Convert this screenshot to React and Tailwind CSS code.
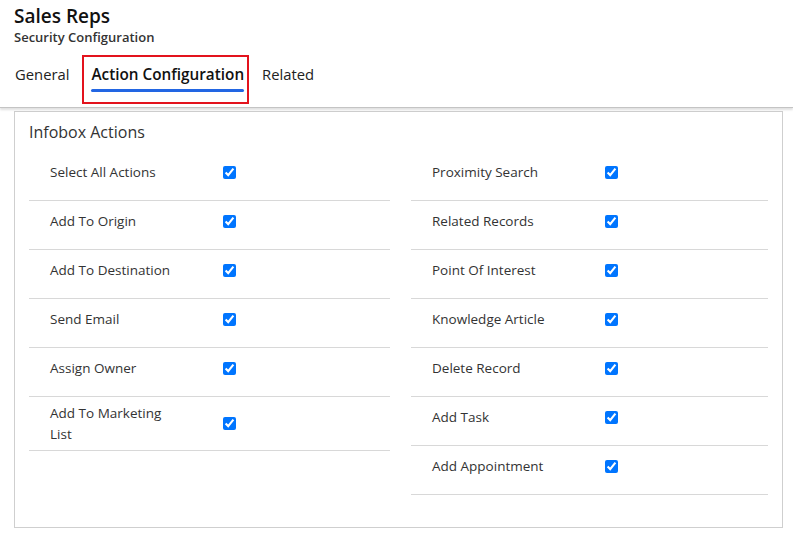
import React from 'react';

const leftActions = [
  'Select All Actions',
  'Add To Origin',
  'Add To Destination',
  'Send Email',
  'Assign Owner',
  'Add To Marketing List',
];

const rightActions = [
  'Proximity Search',
  'Related Records',
  'Point Of Interest',
  'Knowledge Article',
  'Delete Record',
  'Add Task',
  'Add Appointment',
];

const font = { fontFamily: '"Open Sans", "Noto Sans", sans-serif' };

const ActionRow = ({ label }) => {
  const tall = label.length > 18;
  return (
    <div
      className={`flex items-center border-b border-[#d8d8d8] pl-[21px] ${
        tall ? 'h-[54px]' : 'h-[49px] pb-[7px]'
      }`}
    >
      <div className="w-[173px] shrink-0">
        <div className="max-w-[128px] text-[13.5px] leading-[21px] text-[#333]">{label}</div>
      </div>
      <input type="checkbox" checked readOnly className="h-[13px] w-[13px]" />
    </div>
  );
};

const App = () => {
  return (
    <div className="min-h-[540px] w-[793px] bg-white" style={font}>
      {/* header */}
      <div className="relative z-10 border-b border-[#c4c4c4] bg-white pl-[14px] shadow-[0_2px_2px_rgba(0,0,0,0.12)]">
        <div className="pt-[3px] text-[19px] font-semibold leading-[26px] text-[#111]">Sales Reps</div>
        <div className="text-[13px] font-semibold leading-[17px] text-[#333]">Security Configuration</div>
        <div className="mt-[9px] flex items-stretch">
          <div className="flex h-[49px] items-center pb-[10px] pl-[1px] pr-[13px] text-[14.8px] text-[#222]">General</div>
          <div className="flex h-[49px] items-center border-2 border-[#e3131d] pl-[7px] pr-[3px]">
            <div className="relative flex h-full items-center pb-[10px] text-[15.3px] font-semibold text-[#111]">
              Action Configuration
              <div className="absolute bottom-[10px] left-0 right-0 h-[3px] rounded-full bg-[#2266e3]" />
            </div>
          </div>
          <div className="flex h-[49px] items-center pb-[10px] pl-[13px] text-[14.8px] text-[#222]">Related</div>
        </div>
        <div className="h-[3px]" />
      </div>

      {/* panel */}
      <div className="ml-[14px] mt-[3px] h-[417px] w-[769px] border border-[#cfcfcf] px-[14px]">
        <div className="pt-[9px] text-[16px] leading-[22px] text-[#333]">Infobox Actions</div>
        <div className="mt-[9px] flex gap-[21px]">
          <div className="w-[361px]">
            {leftActions.map((a) => (
              <ActionRow key={a} label={a} />
            ))}
          </div>
          <div className="w-[357px]">
            {rightActions.map((a) => (
              <ActionRow key={a} label={a} />
            ))}
          </div>
        </div>
      </div>
    </div>
  );
};

export default App;
